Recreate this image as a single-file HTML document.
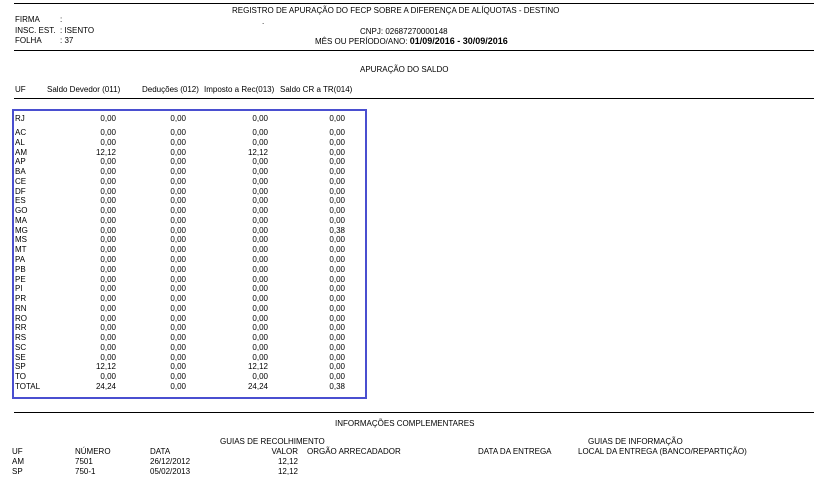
<!DOCTYPE html>
<html><head><meta charset="utf-8"><style>
body{margin:0;width:834px;height:482px;background:#fff;position:relative;font-family:"Liberation Sans",Arial,sans-serif;font-size:8px;color:#000;overflow:hidden}
.t{position:absolute;white-space:nowrap;line-height:9px}
.r{text-align:right}
.hl{position:absolute;height:1px;background:#000}
#box{position:absolute;left:12px;top:109px;width:351px;height:286px;border:2px solid #4a4fd0}
.row{position:absolute;left:15px;height:9px;line-height:9px;width:340px}
.row span{position:absolute;top:0}
</style></head><body>
<div class="hl" style="left:14px;top:3px;width:800px"></div>
<div class="t" style="left:232px;top:6px">REGISTRO DE APURAÇÃO DO FECP SOBRE A DIFERENÇA DE ALÍQUOTAS - DESTINO</div>
<div class="t" style="left:262px;top:17px">.</div>
<div class="t" style="left:15px;top:15px">FIRMA</div><div class="t" style="left:60px;top:15px">:</div>
<div class="t" style="left:15px;top:26px">INSC. EST.</div><div class="t" style="left:60px;top:26px">: ISENTO</div>
<div class="t" style="left:15px;top:36px">FOLHA</div><div class="t" style="left:60px;top:36px">: 37</div>
<div class="t" style="left:360px;top:27px">CNPJ: 02687270000148</div>
<div class="t" style="left:315px;top:37px">MÊS OU PERÍODO/ANO: <b style="font-size:9px">01/09/2016 - 30/09/2016</b></div>
<div class="hl" style="left:14px;top:50px;width:800px"></div>
<div class="t" style="left:360px;top:65px">APURAÇÃO DO SALDO</div>
<div class="t" style="left:15px;top:85px">UF</div>
<div class="t" style="left:47px;top:85px">Saldo Devedor (011)</div>
<div class="t" style="left:142px;top:85px">Deduções (012)</div>
<div class="t" style="left:204px;top:85px">Imposto a Rec(013)</div>
<div class="t" style="left:280px;top:85px">Saldo CR a TR(014)</div>
<div class="hl" style="left:14px;top:98px;width:800px"></div>
<div id="box"></div>
<div id="rows"></div>
<div class="hl" style="left:14px;top:412px;width:800px"></div>
<div class="t" style="left:335px;top:419px">INFORMAÇÕES COMPLEMENTARES</div>
<div class="t" style="left:220px;top:437px">GUIAS DE RECOLHIMENTO</div>
<div class="t" style="left:588px;top:437px">GUIAS DE INFORMAÇÃO</div>
<div class="t" style="left:12px;top:447px">UF</div>
<div class="t" style="left:75px;top:447px">NÚMERO</div>
<div class="t" style="left:150px;top:447px">DATA</div>
<div class="t r" style="left:250px;width:48px;top:447px">VALOR</div>
<div class="t" style="left:307px;top:447px">ORGÃO ARRECADADOR</div>
<div class="t" style="left:478px;top:447px">DATA DA ENTREGA</div>
<div class="t" style="left:578px;top:447px">LOCAL DA ENTREGA (BANCO/REPARTIÇÃO)</div>
<div class="t" style="left:12px;top:457px">AM</div><div class="t" style="left:75px;top:457px">7501</div><div class="t" style="left:150px;top:457px">26/12/2012</div><div class="t r" style="left:250px;width:48px;top:457px">12,12</div>
<div class="t" style="left:12px;top:467px">SP</div><div class="t" style="left:75px;top:467px">750-1</div><div class="t" style="left:150px;top:467px">05/02/2013</div><div class="t r" style="left:250px;width:48px;top:467px">12,12</div>
<script>
var d=[["RJ","0,00","0,00","0,00","0,00"],["AC","0,00","0,00","0,00","0,00"],["AL","0,00","0,00","0,00","0,00"],["AM","12,12","0,00","12,12","0,00"],["AP"],["BA"],["CE"],["DF"],["ES"],["GO"],["MA"],["MG","0,00","0,00","0,00","0,38"],["MS"],["MT"],["PA"],["PB"],["PE"],["PI"],["PR"],["RN"],["RO"],["RR"],["RS"],["SC"],["SE"],["SP","12,12","0,00","12,12","0,00"],["TO"],["TOTAL","24,24","0,00","24,24","0,38"]];
var h="",rights=[116,186,268,345];
d.forEach(function(r,i){var y=i==0?114:128+(i-1)*9.77;
h+='<div class="row" style="top:'+y+'px"><span style="left:0">'+r[0]+'</span>';
for(var k=0;k<4;k++){h+='<span style="right:'+(355-rights[k])+'px">'+(r[k+1]||"0,00")+'</span>';}
h+='</div>';});
document.getElementById("rows").innerHTML=h;
</script>
</body></html>
